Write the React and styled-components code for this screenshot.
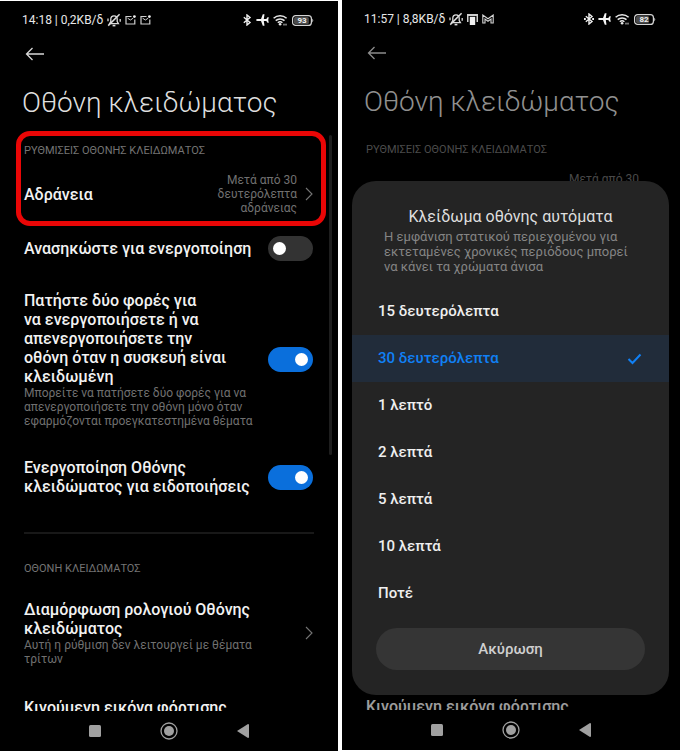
import React, { useState } from 'react'
import styled, { createGlobalStyle } from 'styled-components'

const GlobalStyle = createGlobalStyle`
  * {
    box-sizing: border-box;
  }
  body {
    margin: 0;
    background: #fff;
    font-family: Roboto, "Noto Sans", sans-serif;
  }
  button, input {
    font-family: inherit;
  }
`

const Page = styled.main`
  display: grid;
  grid-template-columns: 1fr 1fr;
  gap: 4px;
  height: 100vh;
  min-height: 480px;
`

const Phone = styled.section`
  position: relative;
  display: flex;
  flex-direction: column;
  min-width: 0;
  min-height: 0;
  background: #000;
  color: #f2f2f2;
  margin-top: ${(props) => (props.$lowered ? '1px' : '0')};
  margin-bottom: ${(props) => (props.$lowered ? '0' : '1px')};
`

const StatusBar = styled.div`
  display: flex;
  align-items: center;
  justify-content: space-between;
  height: 38px;
  flex: none;
  padding: 0 24px 0 22px;
  font-size: 12px;
  line-height: 16px;
  color: #e8e8e8;
`

const StatusGroup = styled.div`
  display: flex;
  align-items: center;
  gap: 4px;
`

const Screen = styled.div`
  position: relative;
  flex: 1;
  min-height: 0;
  overflow: hidden;
  opacity: ${(props) => (props.$dimmed ? 0.65 : 1)};
`

const BackButton = styled.button`
  display: block;
  margin: 5px 0 0 24px;
  padding: 3px 0;
  border: 0;
  background: none;
  color: #d8d8d8;

  svg {
    display: block;
  }
`

const Title = styled.h1`
  margin: 21px 0 10px;
  padding: 0 22px;
  font-size: 28px;
  line-height: 36px;
  font-weight: 300;
  color: #dedede;
  white-space: nowrap;
`

const Highlight = styled.div`
  margin: 0 12px -5px 16px;
  padding: 8px 8px 2px 3px;
  border: 5px solid ${(props) => (props.$active ? '#ea0606' : 'transparent')};
  border-radius: 14px;
`

const Section = styled.div`
  padding: 0 25px 0 24px;
`

const SectionLabel = styled.h2`
  margin: 0;
  padding-bottom: ${(props) => (props.$spaced ? '8px' : '0')};
  font-size: 11px;
  line-height: 14px;
  font-weight: 400;
  color: #747474;
`

const Row = styled.div`
  display: flex;
  align-items: center;
  justify-content: space-between;
  gap: 12px;
  padding: 15px 0;
  visibility: ${(props) => (props.$covered ? 'hidden' : 'visible')};
`

const RowButton = styled.button`
  display: flex;
  align-items: center;
  justify-content: space-between;
  gap: 8px;
  width: 100%;
  padding: ${(props) => (props.$compact ? '15px 0 4px' : '16px 0')};
  border: 0;
  background: none;
  color: inherit;
  text-align: left;
  visibility: ${(props) => (props.$covered ? 'hidden' : 'visible')};
`

const RowText = styled.div`
  flex: 1;
  min-width: 0;
  max-width: 234px;
`

const RowTitle = styled.span`
  display: block;
  font-size: 16px;
  line-height: 19px;
  font-weight: 500;
  color: #f2f2f2;
`

const Description = styled.span`
  display: block;
  font-size: 12px;
  line-height: 14px;
  color: #707070;
`

const RowValue = styled.span`
  width: 86px;
  font-size: 12px;
  line-height: 14px;
  color: #707070;
  text-align: right;
`

const Switch = styled.input`
  appearance: none;
  display: flex;
  align-items: center;
  justify-content: ${(props) => (props.checked ? 'flex-end' : 'flex-start')};
  flex: none;
  width: 45px;
  height: 25px;
  margin: 0;
  padding: 0 5px;
  border-radius: 13px;
  background: ${(props) => (props.checked ? '#0a6fdc' : '#333')};

  &::before {
    content: '';
    width: 13px;
    height: 13px;
    border-radius: 50%;
    background: #fff;
  }
`

const Divider = styled.hr`
  margin: 21px 24px 28px;
  border: 0;
  border-top: 2px solid #181818;
`

const Scrollbar = styled.div`
  position: absolute;
  top: 96px;
  right: 6px;
  width: 3px;
  height: 320px;
  border-radius: 2px;
  background: #1e1e1e;
`

const NavBar = styled.nav`
  display: flex;
  align-items: center;
  justify-content: center;
  gap: 54px;
  flex: none;
  height: 40px;
`

const NavButton = styled.button`
  display: flex;
  padding: 0;
  border: 0;
  background: none;
`

const Dialog = styled.div`
  position: absolute;
  left: 10px;
  right: 11px;
  bottom: 55px;
  padding: 26px 0 25px;
  border-radius: 24px;
  background: #242424;
`

const DialogTitle = styled.h2`
  margin: 0;
  font-size: 16px;
  line-height: 20px;
  font-weight: 400;
  text-align: center;
  color: #dedede;
`

const DialogText = styled.p`
  margin: 2px 32px 14px;
  font-size: 13px;
  line-height: 15px;
  color: #858585;
`

const Options = styled.fieldset`
  margin: 0;
  padding: 0;
  border: 0;
`

const Option = styled.label`
  display: flex;
  align-items: center;
  justify-content: space-between;
  height: 47px;
  padding: 0 27px 0 26px;
  font-size: 15px;
  line-height: 19px;
  font-weight: 500;
  color: ${(props) => (props.$selected ? '#1080f5' : '#efefef')};
  background: ${(props) => (props.$selected ? '#212c3a' : 'transparent')};
`

const HiddenRadio = styled.input`
  position: absolute;
  opacity: 0;
  pointer-events: none;
`

const CancelRow = styled.div`
  padding: 11px 24px 0;
`

const CancelButton = styled.button`
  width: 100%;
  height: 42px;
  border: 0;
  border-radius: 21px;
  background: #353535;
  color: #cfcfcf;
  font-size: 15px;
  font-weight: 500;
`

const MutedBell = () => (
  <svg width="14" height="14" viewBox="0 0 14 14" fill="none" stroke="#dcdcdc" strokeWidth="1.3">
    <path d="M2.600 10.600h8.800L10.200 8.500V6a3.200 3.200 0 0 0-6.400 0v2.500z" />
    <path d="M5.600 12.600h2.800" strokeWidth="1.600" />
    <path d="M1.200 12.600 12.600 1.200" strokeWidth="1.500" />
    <path d="M1 5.500v2.800M13.200 6v2.800" />
  </svg>
)

const Mail = () => (
  <svg width="11" height="10" viewBox="0 0 11 10" fill="none" stroke="#d0d0d0">
    <path d="M6.500 1.500H1v7.500h8.800V4.500" strokeWidth="1.200" />
    <path d="M2.600 3.200 5.400 5l2.800-1.800" />
    <circle cx="9.400" cy="1.600" r="1.400" fill="#f0f0f0" stroke="none" />
  </svg>
)

const Store = () => (
  <svg width="11" height="11" viewBox="0 0 11 11">
    <path d="M0 0h11v8H9.500V2h-8v6H0z" fill="#cfcfcf" />
    <path d="M2.800 2.800h5.400V11H2.800z" fill="#f0f0f0" />
  </svg>
)

const Gmail = () => (
  <svg width="12" height="10" viewBox="0 0 12 10" fill="none" stroke="#d4d4d4" strokeWidth="1.1">
    <path d="M.8 9V1L6 4.700 11.200 1v8H9V5L6 7.300 3 5v4z" />
  </svg>
)

const Bluetooth = ({ connected }) => (
  <svg width="10" height="12" viewBox="0 0 10 12" fill="none" stroke="#f0f0f0" strokeWidth="1.4">
    <path d="M1.800 3.300 8 8.500 5 11V1l3 2.500-6.200 5.200" />
    {connected && <path d="M0 6h1.800M8.200 6H10" strokeWidth="1.800" />}
  </svg>
)

const Plane = () => (
  <svg width="13" height="12" viewBox="0 0 13 12" fill="#f4f4f4">
    <path d="M0 6q.4-1.100 1.500-1.100H5L6.800.3h1.700L7.800 4.900h2.500l1.200-1.700h1.300L12.200 6l.6 2.800h-1.300L10.300 7.100H7.800l.7 4.600H6.800L5 7.100H1.500Q.4 7.100 0 6z" />
  </svg>
)

const Wifi = () => (
  <svg width="15" height="12" viewBox="0 0 15 12" fill="none" stroke="#e8e8e8" strokeWidth="1.5">
    <path d="M.6 4.300a9.500 9.500 0 0 1 13 0M2.700 6.600a6.500 6.500 0 0 1 8.800 0M4.800 8.800a3.500 3.500 0 0 1 4.600 0" />
    <circle cx="7.100" cy="10.300" r="1.300" fill="#e8e8e8" stroke="none" />
    <path d="M11 9.700v1.800M13 9.700v1.800" strokeWidth="1" />
  </svg>
)

const Battery = ({ level }) => (
  <svg width="22" height="11" viewBox="0 0 22 11" role="img" aria-label={'Μπαταρία ' + level}>
    <rect x=".6" y=".6" width="18.800" height="9.800" rx="3" fill="none" stroke="#d4d4d4" strokeWidth="1.200" />
    <rect x="2" y="2" width={(16 * level) / 100} height="7" rx="1.500" fill="#4c4c4c" />
    <path d="M20.300 3.500q1.800 2 0 4z" fill="#d4d4d4" />
    <text x="10" y="8.400" textAnchor="middle" fontSize="8" fontWeight="700" fill="#f0f0f0">{level}</text>
  </svg>
)

const Chevron = () => (
  <svg width="8" height="14" viewBox="0 0 8 14" fill="none" stroke="#747474" strokeWidth="1.1">
    <path d="M1 1l6 6-6 6" />
  </svg>
)

const Check = () => (
  <svg width="15" height="12" viewBox="0 0 15 12" fill="none" stroke="#1080f5" strokeWidth="2">
    <path d="M1.500 6l4 4L13.500 1.500" />
  </svg>
)

const Status = ({ text, level, icons, connected }) => (
  <StatusBar>
    <StatusGroup>
      <span>{text}</span>
      {icons}
    </StatusGroup>
    <StatusGroup>
      <Bluetooth connected={connected} />
      <Plane />
      <Wifi />
      <Battery level={level} />
    </StatusGroup>
  </StatusBar>
)

const SwitchRow = ({ id, title, description, initial, covered }) => {
  const [on, setOn] = useState(initial)

  return (
    <Row $covered={covered}>
      <RowText>
        <RowTitle as="label" htmlFor={id}>{title}</RowTitle>
        {description && <Description>{description}</Description>}
      </RowText>
      <Switch id={id} type="checkbox" role="switch" checked={on} onChange={() => setOn(!on)} />
    </Row>
  )
}

const Settings = ({ name, dimmed, highlighted }) => (
  <Screen $dimmed={dimmed} inert={dimmed}>
    <BackButton aria-label="Πίσω">
      <svg width="20" height="14" viewBox="0 0 20 14" fill="none" stroke="currentColor" strokeWidth="1.300">
        <path d="M20 7H2.500M8.500 1l-6 6 6 6" />
      </svg>
    </BackButton>
    <Title>Οθόνη κλειδώματος</Title>
    <Highlight $active={highlighted}>
      <SectionLabel>ΡΥΘΜΙΣΕΙΣ ΟΘΟΝΗΣ ΚΛΕΙΔΩΜΑΤΟΣ</SectionLabel>
      <RowButton $compact>
        <RowText>
          <RowTitle>Αδράνεια</RowTitle>
        </RowText>
        <RowValue>Μετά από 30 δευτερόλεπτα αδράνειας</RowValue>
        <Chevron />
      </RowButton>
    </Highlight>
    <Section>
      <SwitchRow id={name + '-raise'} title="Ανασηκώστε για ενεργοποίηση" initial={false} covered={dimmed} />
      <SwitchRow
        id={name + '-tap'}
        title={<>Πατήστε δύο φορές για<br />να ενεργοποιήσετε ή να<br />απενεργοποιήσετε την<br />οθόνη όταν η συσκευή είναι<br />κλειδωμένη</>}
        description="Μπορείτε να πατήσετε δύο φορές για να απενεργοποιήσετε την οθόνη μόνο όταν εφαρμόζονται προεγκατεστημένα θέματα"
        initial
        covered={dimmed}
      />
      <SwitchRow id={name + '-wake'} title="Ενεργοποίηση Οθόνης κλειδώματος για ειδοποιήσεις" initial covered={dimmed} />
    </Section>
    <Divider />
    <Section>
      <SectionLabel $spaced>ΟΘΟΝΗ ΚΛΕΙΔΩΜΑΤΟΣ</SectionLabel>
      <RowButton $covered={dimmed}>
        <RowText>
          <RowTitle>Διαμόρφωση ρολογιού Οθόνης κλειδώματος</RowTitle>
          <Description>Αυτή η ρύθμιση δεν λειτουργεί με θέματα τρίτων</Description>
        </RowText>
        <Chevron />
      </RowButton>
      <RowButton>
        <RowText>
          <RowTitle>Κινούμενη εικόνα φόρτισης</RowTitle>
        </RowText>
      </RowButton>
    </Section>
    {!dimmed && <Scrollbar />}
  </Screen>
)

const Navigation = () => (
  <NavBar>
    <NavButton aria-label="Πρόσφατα">
      <svg width="20" height="20" viewBox="0 0 20 20" fill="#a0a0a0">
        <rect x="4" y="4" width="12" height="12" rx="1.500" />
      </svg>
    </NavButton>
    <NavButton aria-label="Αρχική">
      <svg width="20" height="20" viewBox="0 0 20 20" fill="#a0a0a0">
        <circle cx="10" cy="10" r="8" fill="none" stroke="#a0a0a0" strokeWidth="1.300" />
        <circle cx="10" cy="10" r="5" />
      </svg>
    </NavButton>
    <NavButton aria-label="Πίσω">
      <svg width="20" height="20" viewBox="0 0 20 20" fill="#a0a0a0">
        <path d="M4 10l11-7q1 0 1 1v12q0 1-1 1z" />
      </svg>
    </NavButton>
  </NavBar>
)

const times = ['15 δευτερόλεπτα', '30 δευτερόλεπτα', '1 λεπτό', '2 λεπτά', '5 λεπτά', '10 λεπτά', 'Ποτέ']

const TimeoutDialog = () => {
  const [selected, setSelected] = useState(times[1])

  return (
    <Dialog role="dialog" aria-labelledby="timeout-title">
      <DialogTitle id="timeout-title">Κλείδωμα οθόνης αυτόματα</DialogTitle>
      <DialogText>Η εμφάνιση στατικού περιεχομένου για εκτεταμένες χρονικές περιόδους μπορεί να κάνει τα χρώματα άνισα</DialogText>
      <Options aria-labelledby="timeout-title">
        {times.map((time) => (
          <Option key={time} $selected={time === selected}>
            <HiddenRadio type="radio" name="timeout" checked={time === selected} onChange={() => setSelected(time)} />
            {time}
            {time === selected && <Check />}
          </Option>
        ))}
      </Options>
      <CancelRow>
        <CancelButton>Ακύρωση</CancelButton>
      </CancelRow>
    </Dialog>
  )
}

function App() {
  return (
    <>
      <GlobalStyle />
      <Page>
        <Phone $lowered>
          <Status text="14:18 | 0,2KB/δ" level={93} icons={<><MutedBell /><Mail /><Mail /></>} />
          <Settings name="list" highlighted />
          <Navigation />
        </Phone>
        <Phone>
          <Status text="11:57 | 8,8KB/δ" level={82} connected icons={<><MutedBell /><Store /><Gmail /></>} />
          <Settings name="behind" dimmed />
          <Navigation />
          <TimeoutDialog />
        </Phone>
      </Page>
    </>
  )
}

export default App
